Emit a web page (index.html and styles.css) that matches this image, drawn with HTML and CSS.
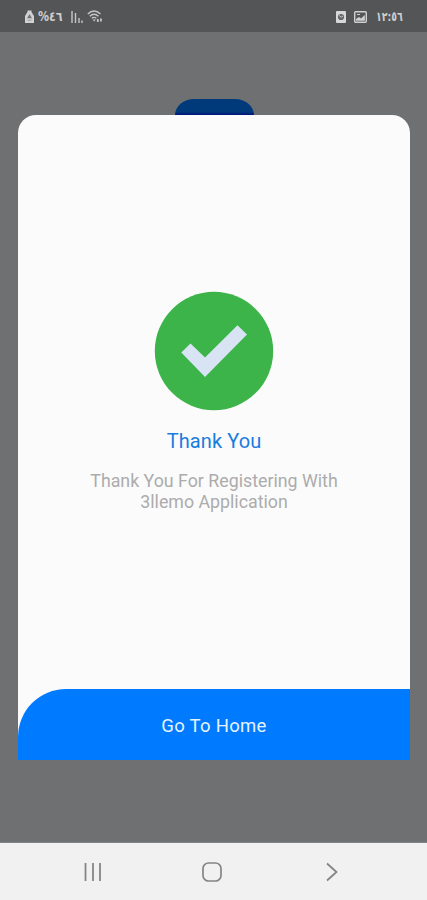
FILE: index.html
```html
<!DOCTYPE html>
<html lang="en">
<head>
<meta charset="utf-8">
<meta name="viewport" content="width=device-width">
<title>Thank You</title>
<link rel="stylesheet" href="styles.css">
</head>
<body>
<header class="status">
  <div class="status-group">
    <svg class="battery" width="9" height="13" viewBox="0 0 9 13"><path d="M2.5 2V0.5h4V2L9 6v7H0V6z" fill="#d2d2d3"/><path d="M4.5 4L2 8.3h5z" fill="#747476"/><path d="M2.5 10.2h4" stroke="#9a9a9b"/></svg>
    <span class="digits percent">%٤٦</span>
    <svg class="signal" width="12" height="12" viewBox="0 0 12 12"><path d="M1 0v12M4.5 2v10M8 7v5M11 9.5V12" stroke="#c6c6c7" stroke-width="1.4"/></svg>
    <svg class="wifi" width="16" height="13" viewBox="0 0 16 13" fill="none" stroke="#c6c6c7" stroke-width="1.4"><path d="M0.8 4Q7 -1.8 13.5 4M2.8 6.2Q7 2.4 11.5 6.2M4.8 8.3Q7 6.5 9.4 8.3"/><path d="M5.5 9.5h3.3L7.2 11.5z" fill="#c6c6c7" stroke="none"/><path d="M10.8 9v3M13.9 8.5v3" stroke-width="1.8"/></svg>
  </div>
  <div class="status-group">
    <svg class="clock" width="10" height="12" viewBox="0 0 10 12"><rect width="10" height="12" rx="1" fill="#d8d8d9"/><circle cx="5" cy="6" r="3.1" fill="#68686a"/><path d="M3.2 4.5l2 1.7L7 5" fill="none" stroke="#c6c6c7"/></svg>
    <svg class="photo" width="13" height="12" viewBox="0 0 13 12"><rect x=".7" y=".7" width="11.6" height="10.6" rx="1" fill="none" stroke="#d0d0d1" stroke-width="1.4"/><path d="M2 9.8V8l3-2 2 1.5L10.8 4v5.8z" fill="#d0d0d1"/><path d="M3 3.5h3" stroke="#d0d0d1"/></svg>
    <span class="digits time">١٢:٥٦</span>
  </div>
</header>
<main class="backdrop">
  <div class="tab"></div>
  <section class="card">
    <div class="content">
      <svg class="check" width="120" height="120" viewBox="0 0 120 120"><circle cx="60" cy="60" r="59.2" fill="#3cb44a"/><path d="M27.3 61.5L36.5 52.5L51 66.5L83.5 34.3L93 43.5L51 86z" fill="#d8e4f3"/></svg>
      <h1 class="title">Thank You</h1>
      <p class="message">Thank You For Registering With<br>3llemo Application</p>
    </div>
    <button class="home">Go To Home</button>
  </section>
</main>
<nav class="nav">
  <svg width="20" height="20" viewBox="0 0 20 20"><path d="M2.5 1v18M10 1v18M17 1v18" stroke="#858585" stroke-width="1.8"/></svg>
  <svg width="20" height="20" viewBox="0 0 20 20"><rect x="1" y="1" width="18" height="18" rx="5.5" fill="none" stroke="#858585" stroke-width="1.7"/></svg>
  <svg width="20" height="20" viewBox="0 0 20 20"><path d="M6 1.5L15.5 10L6 18.5" fill="none" stroke="#858585" stroke-width="1.8"/></svg>
</nav>
</body>
</html>
```
FILE: styles.css
```css
* { box-sizing: border-box; }
body {
  margin: 0;
  height: 900px;
  display: flex;
  flex-direction: column;
  overflow: hidden;
  background: #6f7072;
  font-family: Roboto, sans-serif;
}
svg { display: block; flex: none; }
.status {
  height: 32px;
  flex: none;
  display: flex;
  justify-content: space-between;
  align-items: center;
  padding: 1px 24px 0 25px;
  background: #545557;
}
.status-group { display: flex; align-items: center; }
.digits {
  font: bold 11px/14px "DejaVu Sans", sans-serif;
  color: #cececf;
  direction: ltr;
  unicode-bidi: bidi-override;
  white-space: nowrap;
  transform-origin: 0 50%;
}
.percent { width: 27px; margin-left: 4px; transform: scale(1, 1.2); }
.signal { margin-left: 6px; }
.wifi { margin-left: 4px; }
.photo { margin-left: 8px; }
.time { width: 27px; margin-left: 9px; font-size: 10px; transform: scale(.94, 1.3); }
.backdrop {
  height: 811px;
  flex: none;
  padding: 67px 17px 0 18px;
  border-bottom: 1px solid #828385;
}
.tab {
  width: 79px;
  height: 16px;
  margin-left: 157px;
  border-radius: 19px 19px 0 0 / 16px 16px 0 0;
  background: linear-gradient(#003a7b 80%, #00127a);
}
.card {
  height: 645px;
  display: flex;
  flex-direction: column;
  overflow: hidden;
  border-radius: 18px 18px 0 0;
  background: #fbfbfb;
}
.content {
  flex: 1;
  display: flex;
  flex-direction: column;
  align-items: center;
  padding-top: 176px;
}
.title {
  margin: 18px 0 0;
  font-size: 20px;
  line-height: 24px;
  font-weight: 400;
  letter-spacing: .1px;
  color: #1a7be0;
}
.message {
  margin: 17px 0 0;
  font-size: 17.8px;
  line-height: 21px;
  text-align: center;
  color: #acacac;
}
.home {
  height: 71px;
  flex: none;
  border: 0;
  padding: 2px 0 0;
  border-radius: 48px 0 0 0;
  background: #007bff;
  color: #e6f3ff;
  font: 400 18.5px/22px Roboto, sans-serif;
  letter-spacing: .3px;
}
.nav {
  height: 57px;
  flex: none;
  display: flex;
  justify-content: space-between;
  align-items: center;
  padding: 0 86px 0 83px;
  background: #f1f1f1;
}
```
